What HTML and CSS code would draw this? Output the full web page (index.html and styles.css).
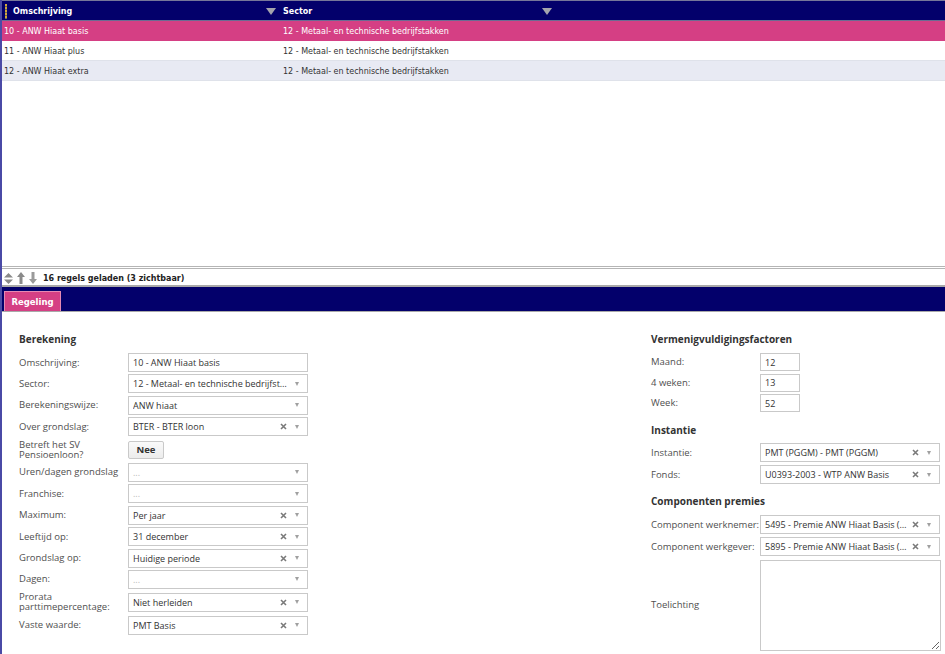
FILE: index.html
```html
<!DOCTYPE html>
<html lang="nl">

<head>
    <meta charset="UTF-8">
    <title>Regelingen</title>
    <link rel="stylesheet" href="styles.css">
</head>

<body>
    <div class="page">
        <!-- Grid met regelingen -->
        <div class="grid">
            <div class="grid-head">
                <div class="col col-omschr"><span class="grip"></span>Omschrijving<span class="sort"></span></div>
                <div class="col col-sector">Sector<span class="sort"></span></div>
            </div>
            <div class="grid-row selected">
                <div class="col col-omschr">10 - ANW Hiaat basis</div>
                <div class="col col-sector">12 - Metaal- en technische bedrijfstakken</div>
            </div>
            <div class="grid-row">
                <div class="col col-omschr">11 - ANW Hiaat plus</div>
                <div class="col col-sector">12 - Metaal- en technische bedrijfstakken</div>
            </div>
            <div class="grid-row alt">
                <div class="col col-omschr">12 - ANW Hiaat extra</div>
                <div class="col col-sector">12 - Metaal- en technische bedrijfstakken</div>
            </div>
        </div>

        <div class="grid-foot">
            <svg class="foot-icon" width="9" height="11" viewBox="0 0 9 11">
                <path d="M4.5 0 L9 4.5 H0 Z M0 6.5 H9 L4.5 11 Z" fill="#8a8a8a" />
            </svg>
            <svg class="foot-icon" width="8" height="12" viewBox="0 0 8 12">
                <path d="M4 0 L8 5 H5.5 V12 H2.5 V5 H0 Z" fill="#8a8a8a" />
            </svg>
            <svg class="foot-icon" width="8" height="12" viewBox="0 0 8 12">
                <path d="M2.5 0 H5.5 V7 H8 L4 12 L0 7 H2.5 Z" fill="#9a9a9a" />
            </svg>
            <span class="foot-text">16 regels geladen (3 zichtbaar)</span>
        </div>

        <div class="tabbar">
            <div class="tab">Regeling</div>
        </div>

        <!-- Detailformulier -->
        <div class="form">
            <div class="form-col left">
                <div class="section-title">Berekening</div>
                <div class="fields">
                    <div class="label">Omschrijving:</div>
                    <div class="input">10 - ANW Hiaat basis</div>

                    <div class="label">Sector:</div>
                    <div class="input select"><span class="value">12 - Metaal- en technische bedrijfstakken</span><span class="arrow"></span></div>

                    <div class="label">Berekeningswijze:</div>
                    <div class="input select"><span class="value">ANW hiaat</span><span class="arrow"></span></div>

                    <div class="label">Over grondslag:</div>
                    <div class="input select"><span class="value">BTER - BTER loon</span><svg class="clear" width="7" height="7" viewBox="0 0 7 7"><path d="M1 1 L6 6 M6 1 L1 6" /></svg><span class="arrow"></span></div>

                    <div class="label two">Betreft het SV<br>Pensioenloon?</div>
                    <div class="toggle-wrap"><button class="toggle">Nee</button></div>

                    <div class="label">Uren/dagen grondslag</div>
                    <div class="input select"><span class="value empty">...</span><span class="arrow"></span></div>

                    <div class="label">Franchise:</div>
                    <div class="input select"><span class="value empty">...</span><span class="arrow"></span></div>

                    <div class="label">Maximum:</div>
                    <div class="input select"><span class="value">Per jaar</span><svg class="clear" width="7" height="7" viewBox="0 0 7 7"><path d="M1 1 L6 6 M6 1 L1 6" /></svg><span class="arrow"></span></div>

                    <div class="label">Leeftijd op:</div>
                    <div class="input select"><span class="value">31 december</span><svg class="clear" width="7" height="7" viewBox="0 0 7 7"><path d="M1 1 L6 6 M6 1 L1 6" /></svg><span class="arrow"></span></div>

                    <div class="label">Grondslag op:</div>
                    <div class="input select"><span class="value">Huidige periode</span><svg class="clear" width="7" height="7" viewBox="0 0 7 7"><path d="M1 1 L6 6 M6 1 L1 6" /></svg><span class="arrow"></span></div>

                    <div class="label">Dagen:</div>
                    <div class="input select"><span class="value empty">...</span><span class="arrow"></span></div>

                    <div class="label two">Prorata<br>parttimepercentage:</div>
                    <div class="input select"><span class="value">Niet herleiden</span><svg class="clear" width="7" height="7" viewBox="0 0 7 7"><path d="M1 1 L6 6 M6 1 L1 6" /></svg><span class="arrow"></span></div>

                    <div class="label">Vaste waarde:</div>
                    <div class="input select"><span class="value">PMT Basis</span><svg class="clear" width="7" height="7" viewBox="0 0 7 7"><path d="M1 1 L6 6 M6 1 L1 6" /></svg><span class="arrow"></span></div>
                </div>
            </div>

            <div class="form-col right">
                <div class="section-title">Vermenigvuldigingsfactoren</div>
                <div class="fields factors">
                    <div class="label">Maand:</div>
                    <div class="input small">12</div>
                    <div class="label">4 weken:</div>
                    <div class="input small">13</div>
                    <div class="label">Week:</div>
                    <div class="input small">52</div>
                </div>

                <div class="section-title instantie">Instantie</div>
                <div class="fields wide">
                    <div class="label">Instantie:</div>
                    <div class="input select"><span class="value">PMT (PGGM) - PMT (PGGM)</span><svg class="clear" width="7" height="7" viewBox="0 0 7 7"><path d="M1 1 L6 6 M6 1 L1 6" /></svg><span class="arrow"></span></div>
                    <div class="label">Fonds:</div>
                    <div class="input select"><span class="value">U0393-2003 - WTP ANW Basis</span><svg class="clear" width="7" height="7" viewBox="0 0 7 7"><path d="M1 1 L6 6 M6 1 L1 6" /></svg><span class="arrow"></span></div>
                </div>

                <div class="section-title componenten">Componenten premies</div>
                <div class="fields wide">
                    <div class="label">Component werknemer:</div>
                    <div class="input select"><span class="value">5495 - Premie ANW Hiaat Basis (werknemer)</span><svg class="clear" width="7" height="7" viewBox="0 0 7 7"><path d="M1 1 L6 6 M6 1 L1 6" /></svg><span class="arrow"></span></div>
                    <div class="label">Component werkgever:</div>
                    <div class="input select"><span class="value">5895 - Premie ANW Hiaat Basis (werkgever)</span><svg class="clear" width="7" height="7" viewBox="0 0 7 7"><path d="M1 1 L6 6 M6 1 L1 6" /></svg><span class="arrow"></span></div>
                    <div class="label">Toelichting</div>
                    <textarea class="memo"></textarea>
                </div>
            </div>
        </div>
    </div>
</body>

</html>
```

FILE: styles.css
```css
body {
    margin: 0;
    padding: 0;
    background-color: #fff;
    font-family: "Open Sans", "Liberation Sans", sans-serif;
}

.page {
    border-left: 2px solid #4a4aa6;
    height: 654px;
    overflow: hidden;
}

/* Grid */
.grid {
    height: 265px;
    border-top: 1px solid #77779a;
    border-bottom: 1px solid #b5b5b5;
    font-family: "DejaVu Sans", sans-serif;
    font-size: 8px;
}

.grid-head {
    display: flex;
    height: 19px;
    background-color: #03006b;
    border-bottom: 1px solid #6b6b92;
    color: #fff;
    font-weight: bold;
}

.col {
    display: flex;
    align-items: center;
    height: 100%;
    box-sizing: border-box;
    white-space: nowrap;
    padding-top: 2px;
}

.col-omschr {
    width: 279px;
    padding-left: 2px;
    padding-right: 5px;
}

.col-sector {
    width: 277px;
    padding-left: 2px;
    padding-right: 6px;
}

.grid-head .col {
    padding-top: 1px;
}

.grip {
    width: 2px;
    height: 15px;
    margin: 0 6px 0 1px;
    background: repeating-linear-gradient(#d2a63a 0 2px, #6d6a5a 2px 3px);
}

.sort {
    margin-left: auto;
    width: 0;
    height: 0;
    border-left: 5.5px solid transparent;
    border-right: 5.5px solid transparent;
    border-top: 7px solid #a4a4ad;
}

.grid-row {
    display: flex;
    height: 19px;
    border-bottom: 1px solid #dfe2ea;
    color: #333;
}

.grid-row.selected {
    background-color: #d53f84;
    border-bottom-color: #d53f84;
    color: #fff;
}

.grid-row.alt {
    background-color: #e8eaf3;
}

/* Grid footer */
.grid-foot {
    margin-top: 1px;
    border-top: 1px solid #b5b5b5;
    height: 17px;
    box-sizing: border-box;
    padding: 2px 0 0 2px;
    display: flex;
    align-items: center;
    font-family: "DejaVu Sans", sans-serif;
    font-size: 8px;
    font-weight: bold;
    color: #222;
}

.foot-icon {
    margin-right: 4px;
}

.foot-text {
    margin-left: 2px;
}

/* Tabs */
.tabbar {
    height: 24px;
    background-color: #03006b;
    border-top: 2px solid #a9a9a9;
    border-bottom: 1px solid #a9a9a9;
    display: flex;
    align-items: flex-end;
    padding-left: 2px;
}

.tab {
    width: 57px;
    height: 20px;
    background-color: #d53f84;
    border: 1px solid #e58ab3;
    border-bottom: none;
    color: #fff;
    font-family: "DejaVu Sans", sans-serif;
    font-size: 8.5px;
    font-weight: bold;
    display: flex;
    align-items: center;
    justify-content: center;
    padding-top: 1px;
    box-sizing: border-box;
}

/* Form */
.form {
    display: flex;
    padding: 20px 0 0 17px;
}

.form-col.left {
    width: 632px;
}

.form-col.right {
    flex: 1;
}

.section-title {
    font-size: 10px;
    font-weight: bold;
    color: #333;
    line-height: 14px;
    margin-bottom: 7px;
}

.section-title.instantie {
    margin-top: 11px;
    margin-bottom: 6px;
}

.section-title.componenten {
    margin-top: 10px;
}

.fields {
    display: grid;
    grid-template-columns: 109px 180px;
    row-gap: 2.4px;
    align-items: center;
}

.fields.factors {
    row-gap: 2.5px;
}

.fields.wide {
    row-gap: 3px;
}

.label {
    font-size: 9.5px;
    line-height: 10px;
    color: #4f4f4f;
}

.label.two {
    padding: 1px 0;
}

.input {
    height: 19px;
    box-sizing: border-box;
    border: 1px solid #c9c9c9;
    display: flex;
    align-items: center;
    padding: 0 4px;
    font-size: 9px;
    color: #333;
    background-color: #fff;
}

.input.small {
    width: 40px;
    height: 18px;
}

.select .value {
    flex: 1;
    overflow: hidden;
    text-overflow: ellipsis;
    white-space: nowrap;
}

.select .value.empty {
    color: #bbb;
}

.select .clear {
    margin: 0 8px 0 4px;
    flex: none;
}

.select .clear path {
    stroke: #7a7a7a;
    stroke-width: 1.6;
}

.select .arrow {
    width: 0;
    height: 0;
    margin: 0 4px 0 0;
    border-left: 2.5px solid transparent;
    border-right: 2.5px solid transparent;
    border-top: 4px solid #a0a0a0;
}

.select .value + .arrow {
    margin-left: 8px;
}

.toggle-wrap {
    display: flex;
    align-items: center;
}

.toggle {
    width: 36px;
    height: 18px;
    padding: 0;
    border: 1px solid #c9c9c9;
    border-radius: 2px;
    background: linear-gradient(#fafafa, #ececec);
    font-family: "Open Sans", sans-serif;
    font-size: 9.5px;
    font-weight: bold;
    color: #333;
}

.memo {
    width: 181px;
    height: 91px;
    box-sizing: border-box;
    border: 1px solid #c9c9c9;
    margin: 1px 0 0;
    resize: both;
}
```
